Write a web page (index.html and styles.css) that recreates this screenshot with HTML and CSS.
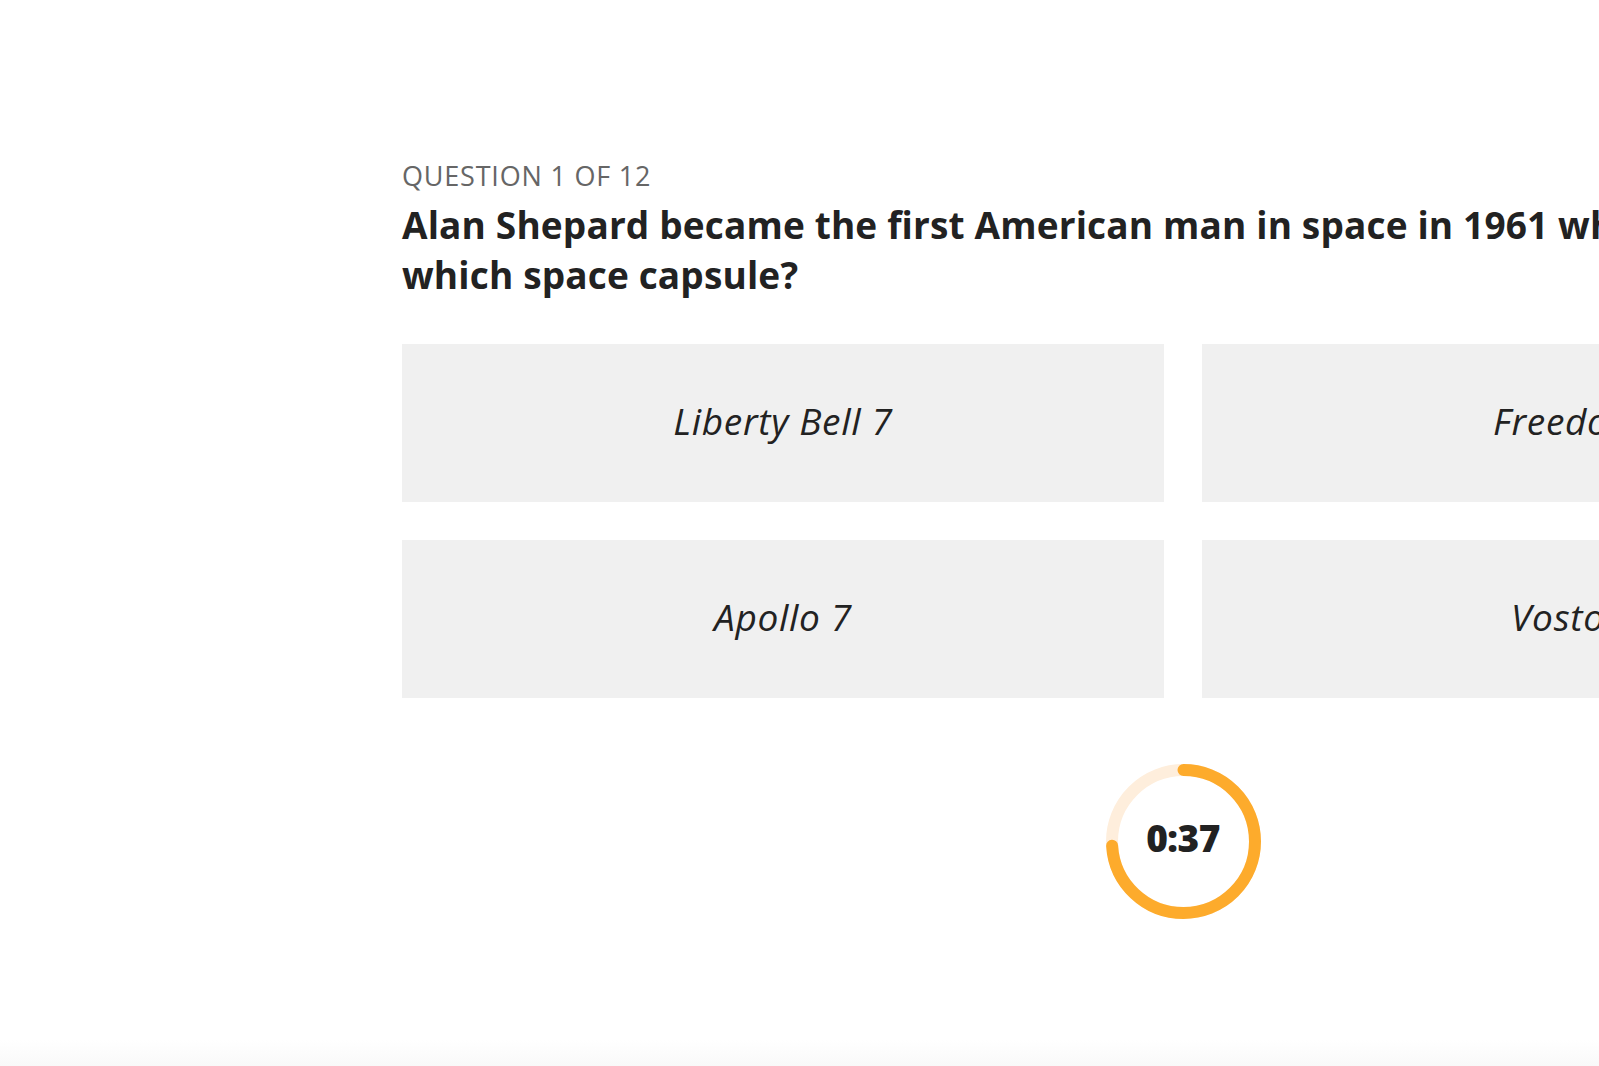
FILE: index.html
```html
<!DOCTYPE html>
<html lang="en">
<head>
    <meta charset="UTF-8">
    <meta name="viewport" content="width=device-width, initial-scale=1.0">
    <title>Quiz</title>
    <link rel="stylesheet" href="styles.css">
</head>
<body>
  <div class="quiz">
    <div class="question-count">Question 1 of 12</div>
    <h1 class="question">Alan Shepard became the first American man in space in 1961 when he flew aboard which space capsule?</h1>

    <div class="answers">
      <button class="answer">Liberty Bell 7</button>
      <button class="answer">Freedom 7</button>
      <button class="answer">Apollo 7</button>
      <button class="answer">Vostok 1</button>
    </div>

    <div class="timer">
      <svg class="timer-ring" viewBox="0 0 155 155" width="155" height="155">
        <circle class="track" cx="77.5" cy="77.5" r="71.5"></circle>
        <circle class="progress" cx="77.5" cy="77.5" r="71.5" stroke-dasharray="332 449.2"></circle>
      </svg>
      <span class="timer-text">0:37</span>
    </div>
  </div>
</body>
</html>
```

FILE: styles.css
```css
html {
  background: linear-gradient(to bottom, #fff calc(100% - 26px), #f9f9f9);
  min-height: 100%;
}
body {
  margin: 0;
  min-height: 100vh;
  overflow: hidden;
  font-family: "Open Sans", Lato, sans-serif;
  color: #222;
}
.quiz {
  width: 1562px;
  margin-left: 402px;
  padding-top: 160px;
}
.question-count {
  font-size: 27px;
  line-height: 31px;
  text-transform: uppercase;
  color: #666;
  letter-spacing: 0.8px;
}
.question {
  margin: 9px 0 0;
  font-size: 37px;
  line-height: 50px;
  font-weight: 700;
  letter-spacing: 0.15px;
}
.answers {
  display: grid;
  grid-template-columns: 1fr 1fr;
  gap: 38px;
  margin-top: 44px;
}
.answer {
  height: 158px;
  border: none;
  background: #f0f0f0;
  font-family: inherit;
  font-style: italic;
  font-size: 37px;
  letter-spacing: 0.7px;
  color: #222;
  cursor: pointer;
  padding: 0 0 6px;
}
.timer {
  display: grid;
  place-items: center;
  width: 155px;
  height: 155px;
  margin: 66px auto 0;
}
.timer-ring,
.timer-text {
  grid-area: 1 / 1;
}
.timer-ring {
  transform: rotate(-90deg);
}
.timer-ring circle {
  fill: none;
  stroke-width: 12;
}
.track {
  stroke: #feeedc;
}
.progress {
  stroke: #fdab2c;
  stroke-linecap: round;
}
.timer-text {
  font-size: 37px;
  font-weight: 800;
  letter-spacing: -0.5px;
  padding-bottom: 8px;
}
```
